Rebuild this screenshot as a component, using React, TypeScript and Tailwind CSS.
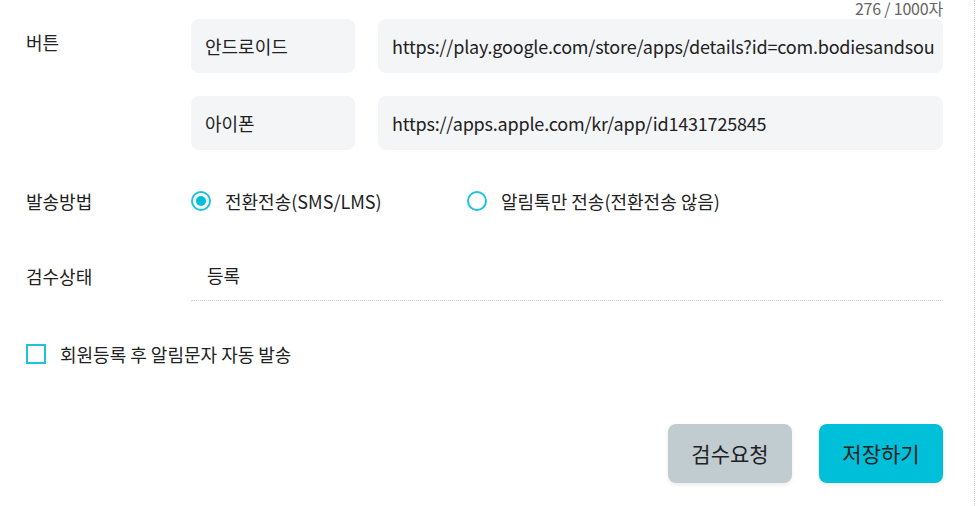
import React from 'react';

const font = { fontFamily: '"Noto Sans CJK KR", "Noto Sans", sans-serif' };

function Radio({ checked, label }: { checked?: boolean; label: string }) {
  return (
    <label className="flex items-center gap-[14px] cursor-pointer">
      <span className="w-[20px] h-[20px] rounded-full border-2 border-[#1ec3d9] flex items-center justify-center bg-white">
        {checked && <span className="w-[10px] h-[10px] rounded-full bg-[#00bfd8]" />}
      </span>
      <span className="text-[18px] leading-none text-[#222]">{label}</span>
    </label>
  );
}

export default function App() {
  return (
    <div className="w-[975px] h-[506px] bg-white border-r border-dotted border-[#cfcfcf] overflow-hidden text-[#222]" style={font}>
      <div className="pl-[26px] pr-[31px]">
        <div className="h-[19px] flex justify-end">
          <span className="text-[16px] leading-[16px] text-[#666] tracking-[-0.2px]">276 / 1000자</span>
        </div>

        <div className="flex">
          <div className="w-[165px] shrink-0 h-[54px] pt-[14px] text-[18px] leading-none">버튼</div>
          <div className="flex-1 min-w-0 flex flex-col gap-[23px]">
            <div className="flex gap-[23px]">
              <div className="w-[164px] shrink-0 h-[54px] rounded-[8px] bg-[#f4f5f7] flex items-center px-[14px] text-[18px]">안드로이드</div>
              <div className="flex-1 min-w-0 h-[54px] rounded-[8px] bg-[#f4f5f7] flex items-center px-[14px] text-[18px] tracking-[-0.2px] whitespace-nowrap overflow-hidden">https://play.google.com/store/apps/details?id=com.bodiesandsou</div>
            </div>
            <div className="flex gap-[23px]">
              <div className="w-[164px] shrink-0 h-[54px] rounded-[8px] bg-[#f4f5f7] flex items-center px-[14px] text-[18px]">아이폰</div>
              <div className="flex-1 min-w-0 h-[54px] rounded-[8px] bg-[#f4f5f7] flex items-center px-[14px] text-[18px] tracking-[-0.2px] whitespace-nowrap overflow-hidden">https://apps.apple.com/kr/app/id1431725845</div>
            </div>
          </div>
        </div>

        <div className="flex items-center h-[54px] mt-[24px]">
          <div className="w-[165px] shrink-0 text-[18px] leading-none">발송방법</div>
          <div className="flex items-center">
            <div className="w-[276px]">
              <Radio checked label="전환전송(SMS/LMS)" />
            </div>
            <Radio label="알림톡만 전송(전환전송 않음)" />
          </div>
        </div>

        <div className="flex items-center h-[51px] mt-[22px]">
          <div className="w-[165px] shrink-0 text-[18px] leading-none">검수상태</div>
          <div className="flex-1 h-full flex items-center pl-[16px] border-b border-dotted border-[#c8c8c8] text-[18px] leading-none">등록</div>
        </div>

        <div className="flex items-center gap-[14px] h-[20px] mt-[43px]">
          <span className="w-[20px] h-[20px] border-2 border-[#1ec3d9] bg-white" />
          <span className="text-[18px] leading-none">회원등록 후 알림문자 자동 발송</span>
        </div>

        <div className="flex justify-end gap-[27px] mt-[60px]">
          <button className="w-[124px] h-[59px] rounded-[8px] bg-[#c1ccd1] text-[21px] leading-none text-[#222] shadow-[0_2px_4px_rgba(0,0,0,0.08)]">검수요청</button>
          <button className="w-[124px] h-[59px] rounded-[8px] bg-[#00bfd9] text-[21px] leading-none text-[#222] shadow-[0_2px_4px_rgba(0,0,0,0.08)]">저장하기</button>
        </div>
      </div>
    </div>
  );
}
